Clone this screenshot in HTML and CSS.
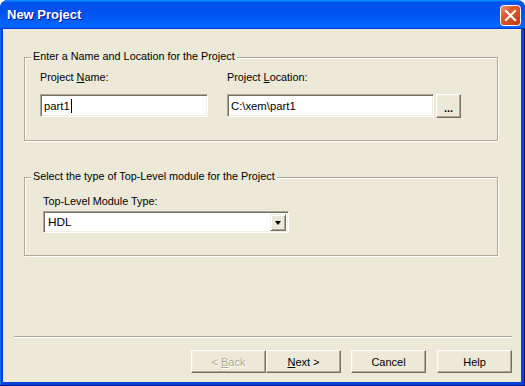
FILE: index.html
```html
<!DOCTYPE html>
<html lang="en">

<head>
  <meta charset="UTF-8">
  <title>New Project</title>
  <link rel="stylesheet" href="styles.css">
</head>

<body>
  <div class="window">
    <div class="titlebar">
      <span class="title">New Project</span>
      <span class="close-btn">
        <svg width="21" height="21" viewBox="0 0 21 21">
          <defs>
            <linearGradient id="cg" x1="0" y1="0" x2="1" y2="1">
              <stop offset="0" stop-color="#ef9a76" />
              <stop offset="0.35" stop-color="#e0582c" />
              <stop offset="1" stop-color="#c23a12" />
            </linearGradient>
          </defs>
          <rect x="0.5" y="0.5" width="20" height="20" rx="3" fill="url(#cg)" stroke="#fff" />
          <path d="M6 6 L15 15 M15 6 L6 15" stroke="#fff" stroke-width="2.2" stroke-linecap="square" />
        </svg>
      </span>
    </div>

    <div class="client">
      <div class="groups">
        <!-- name and location -->
        <div class="group group-location">
          <div class="group-title">Enter a Name and Location for the Project</div>
          <div class="fields">
            <div class="field field-name">
              <label class="field-label">Project <u>N</u>ame:</label>
              <div class="textbox">part1<span class="caret"></span></div>
            </div>
            <div class="field field-loc">
              <label class="field-label">Project <u>L</u>ocation:</label>
              <div class="loc-row">
                <div class="textbox textbox-loc">C:\xem\part1</div>
                <button class="btn btn-browse">...</button>
              </div>
            </div>
          </div>
        </div>

        <!-- module type -->
        <div class="group group-type">
          <div class="group-title">Select the type of Top-Level module for the Project</div>
          <label class="field-label">Top-Level Module Type:</label>
          <div class="combo">
            <span class="combo-text">HDL</span>
            <span class="combo-arrow"><span class="tri"></span></span>
          </div>
        </div>
      </div>

      <div class="separator"></div>

      <div class="buttons">
        <button class="btn btn-disabled">&lt; <u>B</u>ack</button>
        <button class="btn"><u>N</u>ext &gt;</button>
        <button class="btn btn-cancel">Cancel</button>
        <button class="btn btn-help">Help</button>
      </div>
    </div>
  </div>
</body>

</html>
```

FILE: styles.css
```css
html,
body {
  margin: 0;
  background: #fff;
}

.window {
  width: 525px;
  height: 386px;
  display: flex;
  flex-direction: column;
  background: #0842d6;
  border-radius: 8px 8px 0 0;
  box-shadow: inset -1px -1px 0 #00138c, inset 1px 0 0 #166aee;
  font-family: "Liberation Sans", Arial, sans-serif;
  font-size: 10.8px;
  color: #000;
  overflow: hidden;
}

/* title bar */
.titlebar {
  height: 29px;
  flex: none;
  display: flex;
  align-items: center;
  justify-content: space-between;
  padding: 0 4px 0 7px;
  background: linear-gradient(180deg, #0997ff, #0053ee 8%, #0050ee 40%, #06f 88%, #06f 93%, #005bff 95%, #003dd7 96%, #003dd7);
  border-radius: 8px 8px 0 0;
}

.title {
  color: #fff;
  font-family: "Liberation Sans", Arial, sans-serif;
  font-weight: bold;
  font-size: 13px;
  text-shadow: 1px 1px 0 #0f1089;
}

.close-btn {
  width: 21px;
  height: 21px;
  margin-top: 2px;
  display: block;
}

.close-btn svg {
  display: block;
}

/* client area */
.client {
  flex: 1;
  display: flex;
  flex-direction: column;
  margin: 0 4px 4px 3px;
  background: #ece9d8;
}

.groups {
  padding: 0 23px 0 21px;
}

.group {
  border: 1px solid #aca899;
  box-shadow: inset 1px 1px 0 #fff, 1px 1px 0 #fff;
  padding: 0 15px 22px;
}

.group-location {
  margin-top: 28px;
}

.group-type {
  margin-top: 36px;
  padding-left: 18px;
}

.group-title {
  width: max-content;
  line-height: 13px;
  margin: -8px 0 0 -9px;
  padding: 0 2px;
  background: #ece9d8;
}

.group-type .group-title {
  margin-left: -12px;
}

.field-label {
  display: block;
  line-height: 13px;
  cursor: default;
}

.fields {
  display: flex;
  gap: 19px;
  margin-top: 8px;
}

.field-name {
  width: 168px;
}

.field .field-label {
  margin-bottom: 10px;
}

.group-type .field-label {
  margin-top: 12px;
  margin-bottom: 3px;
}

.textbox {
  height: 23px;
  box-sizing: border-box;
  background: #fff;
  border: 1px solid;
  border-color: #aca899 #fff #fff #aca899;
  box-shadow: inset 1px 1px 0 #716f64, inset -1px -1px 0 #f1efe2;
  padding: 0 3px;
  display: flex;
  align-items: center;
  font-size: 11.3px;
}

.caret {
  display: inline-block;
  width: 1px;
  height: 14px;
  background: #000;
  margin-left: 1px;
}

.loc-row {
  display: flex;
  align-items: flex-start;
  gap: 2px;
}

.textbox-loc {
  width: 207px;
}

/* combo box */
.combo {
  width: 246px;
  height: 22px;
  box-sizing: border-box;
  display: flex;
  align-items: center;
  justify-content: space-between;
  background: #fff;
  border: 1px solid;
  border-color: #aca899 #fff #fff #aca899;
  box-shadow: inset 1px 1px 0 #716f64, inset -1px -1px 0 #f1efe2;
  padding: 2px 2px 2px 4px;
  font-size: 11.8px;
}

.combo-arrow {
  width: 16px;
  height: 17px;
  box-sizing: border-box;
  display: flex;
  align-items: center;
  justify-content: center;
  background: #ece9d8;
  border: 1px solid;
  border-color: #f1efe2 #716f64 #716f64 #f1efe2;
  box-shadow: inset 1px 1px 0 #fff, inset -1px -1px 0 #aca899;
}

.tri {
  width: 0;
  height: 0;
  border-left: 3.5px solid transparent;
  border-right: 3.5px solid transparent;
  border-top: 4px solid #000;
  margin-top: 1px;
}

/* buttons */
.btn {
  width: 75px;
  height: 23px;
  box-sizing: border-box;
  padding: 0;
  background: #ece9d8;
  border: 1px solid;
  border-color: #fff #716f64 #716f64 #fff;
  box-shadow: inset -1px -1px 0 #aca899, inset 1px 1px 0 #f1efe2;
  font-family: "Liberation Sans", Arial, sans-serif;
  font-size: 11px;
  color: #000;
}

.btn-browse {
  width: 25px;
  height: 24px;
  font-weight: bold;
  font-size: 11px;
  padding-top: 3px;
}

.btn-disabled {
  color: #aca899;
  text-shadow: 1px 1px 0 #fff;
}

.separator {
  margin: auto 9px 0 11px;
  height: 1px;
  background: #aca899;
  border-bottom: 1px solid #fff;
}

.buttons {
  display: flex;
  justify-content: flex-end;
  padding: 12px 9px 9px 0;
}

.btn-cancel {
  margin-left: 10px;
}

.btn-help {
  margin-left: 11px;
}
```
